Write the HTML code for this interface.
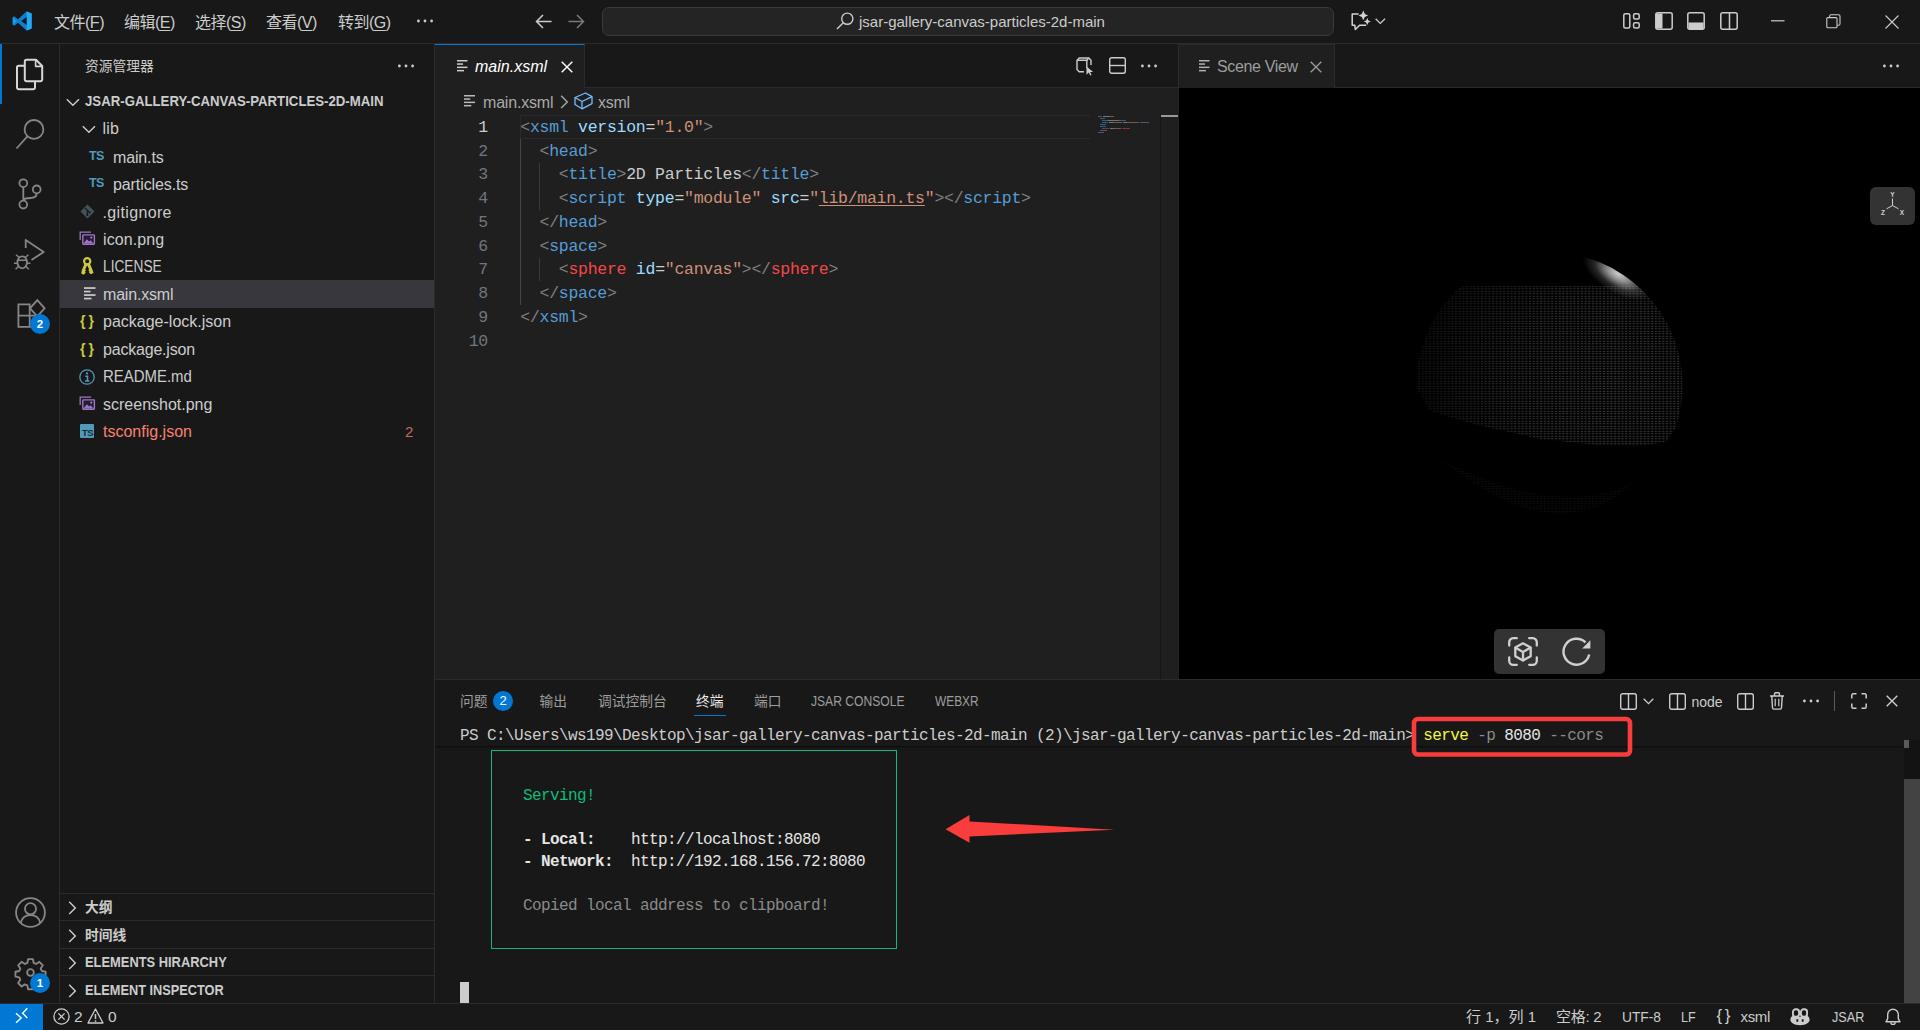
<!DOCTYPE html>
<html lang="zh-CN">
<head>
<meta charset="utf-8">
<title>jsar-gallery-canvas-particles-2d-main</title>
<style>
*{box-sizing:border-box;margin:0;padding:0}
html,body{width:1920px;height:1030px;overflow:hidden;background:#181818}
body{position:relative;font-family:"Liberation Sans","Noto Sans CJK SC",sans-serif;font-size:16px;color:#ccc}
.a{position:absolute}
.t{position:absolute;white-space:pre;line-height:20px;height:20px}
.m{font-family:"Liberation Mono","Noto Sans CJK SC",monospace}
svg{position:absolute;overflow:visible}
u{text-decoration-thickness:1px;text-underline-offset:2px}
/* ---------- regions ---------- */
#titlebar{left:0;top:0;width:1920px;height:44px;background:#181818;border-bottom:1px solid #2b2b2b}
#activity{left:0;top:44px;width:60px;height:959px;background:#181818;border-right:1px solid #2b2b2b}
#sidebar{left:60px;top:44px;width:375px;height:959px;background:#181818;border-right:1px solid #2b2b2b}
#ed1{left:435px;top:44px;width:744px;height:635px;background:#1f1f1f}
#ed2{left:1179px;top:44px;width:741px;height:635px;background:#000}
#panel{left:435px;top:679px;width:1485px;height:324px;background:#181818;border-top:1px solid #2b2b2b}
#status{left:0;top:1003px;width:1920px;height:27px;background:#181818;border-top:1px solid #2b2b2b}
/* title */
.menu{font-size:16px;letter-spacing:-.5px;color:#ccc}
/* tree */
.row{font-size:16px;color:#ccc}
.hd{font-size:13.75px;font-weight:700;color:#ccc}
.sec{left:0;width:374px;height:1px;background:#2b2b2b}
/* code */
.ln{font-size:16.5px;letter-spacing:-.275px;color:#6e7681;text-align:right;width:60px;height:24px;line-height:24px}
.cl{font-size:16.5px;letter-spacing:-.275px;height:24px;line-height:24px;color:#ccc}
.b{color:#808080}.g{color:#569cd6}.at{color:#9cdcfe}.s{color:#ce9178}.r{color:#f44747}
/* panel */
.pt{font-size:13.75px;color:#9d9d9d}
.tm{font-size:16px;letter-spacing:-.6px;height:22px;line-height:22px;color:#ccc}
.sb{font-size:15px;color:#ccc}
</style>
</head>
<body>
<!-- ============ TITLE BAR ============ -->
<div id="titlebar" class="a">
  <svg style="left:12px;top:11px" width="20" height="20" viewBox="0 0 100 100"><path d="M74 2 30 42 11 27 3 31v38l8 4 19-15 44 40 24-10V12z" fill="#1f9cf0"/><path d="M74 2 30 42l-19-15-8 4 20 19L3 69l8 4 19-15 44 40z" fill="#0d7fd1"/><path d="M74 30v40L46 50z" fill="#181818"/><path d="M74 2v96l24-10V12z" fill="#26a8f5"/></svg>
  <span class="t menu" style="left:54px;top:12.700px">文件(<u>F</u>)</span>
  <span class="t menu" style="left:124px;top:12.700px">编辑(<u>E</u>)</span>
  <span class="t menu" style="left:195px;top:12.700px">选择(<u>S</u>)</span>
  <span class="t menu" style="left:266px;top:12.700px">查看(<u>V</u>)</span>
  <span class="t menu" style="left:338px;top:12.700px">转到(<u>G</u>)</span>
  <svg style="left:416px;top:19px" width="18" height="4"><circle cx="2.4" cy="2" r="1.4" fill="#ccc"/><circle cx="9" cy="2" r="1.4" fill="#ccc"/><circle cx="15.6" cy="2" r="1.4" fill="#ccc"/></svg>
  <!-- nav arrows -->
  <svg style="left:535px;top:14px" width="17" height="15" fill="none" stroke="#ccc" stroke-width="1.5"><path d="M16.5 7.5H1.5M8 1 1.5 7.5 8 14"/></svg>
  <svg style="left:568px;top:14px" width="17" height="15" fill="none" stroke="#7a7a7a" stroke-width="1.5"><path d="M.5 7.5h15M9 1l6.5 6.5L9 14"/></svg>
  <!-- command center -->
  <div class="a" style="left:602px;top:7px;width:732px;height:29px;background:#242424;border:1px solid #3a3a3a;border-radius:7px"></div>
  <svg style="left:836px;top:12px" width="18" height="18" fill="none" stroke="#ccc" stroke-width="1.4"><circle cx="11.3" cy="6.7" r="5.6"/><path d="M7.3 10.7 1 17"/></svg>
  <span class="t" style="left:859px;top:12px;font-size:15px;color:#ccc">jsar-gallery-canvas-particles-2d-main</span>
  <!-- copilot -->
  <svg style="left:1351px;top:10px" width="22" height="22" fill="none" stroke="#d4d4d4" stroke-width="1.500" stroke-linejoin="round"><path d="M7.600 4H1.200v11.200h2.600l.5 4.300 4.300-4.300h6.600"/><path d="M12.300.6l1.500 3.300 3.300 1.500-3.300 1.500-1.500 3.300-1.500-3.300-3.300-1.500 3.300-1.500z" fill="#d4d4d4" stroke="none"/><path d="M16.300 8l1.100 2.400 2.400 1.100-2.400 1.100-1.100 2.400-1.100-2.400-2.400-1.100 2.400-1.100z" fill="#d4d4d4" stroke="none"/></svg>
  <svg style="left:1375px;top:17.500px" width="11" height="7" fill="none" stroke="#ccc" stroke-width="1.300"><path d="M.6.700 5.300 5.400 10 .7"/></svg>
  <!-- layout controls -->
  <svg style="left:1623px;top:13px" width="18" height="16" fill="none" stroke="#ccc" stroke-width="1.5"><rect x=".8" y=".8" width="6" height="14.2" rx="1.5"/><rect x="10.6" y=".8" width="5.6" height="5.2" rx="1.5"/><rect x="10.6" y="9.8" width="5.6" height="5.2" rx="1.5"/></svg>
  <svg style="left:1655px;top:12px" width="18" height="18" fill="none" stroke="#ccc" stroke-width="1.5"><rect x=".8" y=".8" width="16.4" height="16.4" rx="2"/><path d="M1 1.5h6.5v15H1z" fill="#ccc" stroke="none"/></svg>
  <svg style="left:1687px;top:12px" width="18" height="18" fill="none" stroke="#ccc" stroke-width="1.5"><rect x=".8" y=".8" width="16.4" height="16.4" rx="2"/><path d="M1.5 10.5h15V17h-15z" fill="#ccc" stroke="none"/></svg>
  <svg style="left:1720px;top:12px" width="18" height="18" fill="none" stroke="#ccc" stroke-width="1.5"><rect x=".8" y=".8" width="16.4" height="16.4" rx="2"/><path d="M9.5 1v16"/></svg>
  <!-- window controls -->
  <svg style="left:1771px;top:20px" width="14" height="2"><rect width="13.5" height="1.2" y=".2" fill="#ccc"/></svg>
  <svg style="left:1826px;top:14px" width="15" height="15" fill="none" stroke="#ccc" stroke-width="1.1"><rect x=".8" y="3.6" width="10.2" height="10.2" rx="1"/><path d="M3.6 3.4V2.2a1.4 1.4 0 0 1 1.4-1.4h7.6a1.4 1.4 0 0 1 1.4 1.4v7.6a1.4 1.4 0 0 1-1.4 1.4h-1.4"/></svg>
  <svg style="left:1885px;top:15px" width="14" height="14" fill="none" stroke="#ccc" stroke-width="1.1"><path d="M.5.5l13 13M13.5.5l-13 13"/></svg>
</div>
<!-- ============ ACTIVITY BAR ============ -->
<div id="activity" class="a">
  <div class="a" style="left:0;top:0;width:2px;height:60px;background:#0078d4"></div>
  <!-- files -->
  <svg style="left:15px;top:14px" width="30" height="32" fill="none" stroke="#d7d7d7" stroke-width="2" stroke-linejoin="round"><path d="M9.8 7.8h-6a1.8 1.8 0 0 0-1.8 1.8v19.800a1.800 1.800 0 0 0 1.800 1.800h14.400a1.800 1.800 0 0 0 1.800-1.800v-5.600"/><path d="M11.600 1.800h9.400l6.200 6.200v13.400a1.800 1.800 0 0 1-1.800 1.800h-13.800a1.800 1.800 0 0 1-1.800-1.800v-17.800a1.800 1.800 0 0 1 1.800-1.800z"/><path d="M20.600 2v6.400h6.400" stroke-width="1.600"/></svg>
  <!-- search -->
  <svg style="left:14px;top:74px" width="32" height="34" fill="none" stroke="#868686" stroke-width="1.8"><circle cx="20" cy="11.4" r="9.400"/><path d="M13.400 18.400 2.500 30.500"/></svg>
  <!-- scm -->
  <svg style="left:16px;top:132px" width="30" height="36" fill="none" stroke="#868686" stroke-width="1.8"><circle cx="7.300" cy="7.200" r="3.900"/><circle cx="7.300" cy="28.600" r="3.900"/><circle cx="20.700" cy="13.400" r="3.900"/><path d="M7.300 11.100v13.600M20.700 17.300c0 4-3 4.700-6.400 4.700-3.400 0-7 .2-7 2.700"/></svg>
  <!-- debug -->
  <svg style="left:12px;top:192px" width="36" height="36" fill="none" stroke="#868686" stroke-width="1.8" stroke-linejoin="round"><path d="M13.700 12V4l18 12-12.200 7.900"/><ellipse cx="10.200" cy="26.300" rx="4.800" ry="6"/><path d="M5.400 24.300h9.600M7.200 21.500 4 18.700M13.200 21.500l3.200-2.800M5.400 27.300H2M15 27.300h3.400M6.400 30.500 3.600 33.300M14 30.500l2.800 2.800" stroke-width="1.500"/></svg>
  <!-- extensions -->
  <svg style="left:17px;top:255px" width="32" height="34" fill="none" stroke="#868686" stroke-width="1.800"><path d="M1.400 5.300h11.300v11.300H1.400zM1.400 16.600h11.300v11.300H1.400zM12.700 16.600H24v11.300H12.700z"/><path d="M20.300 1.200l7.300 8.100-7.300 8.100-7.300-8.100z"/></svg>
  <div class="a" style="left:30px;top:270px;width:20px;height:20px;border-radius:10px;background:#0078d4"></div>
  <span class="t" style="left:30px;top:270px;width:20px;text-align:center;font-size:11.500px;font-weight:700;color:#fff">2</span>
  <!-- account -->
  <svg style="left:15px;top:853px" width="31" height="31" fill="none" stroke="#868686" stroke-width="1.800"><circle cx="15.500" cy="15.500" r="14.400"/><circle cx="15.500" cy="11.800" r="5.600"/><path d="M5.700 26c1.200-5 5-7.800 9.800-7.800s8.600 2.800 9.800 7.800"/></svg>
  <!-- gear -->
  <svg style="left:16px;top:914px" width="29" height="29" viewBox="-15.500 -15.500 31 31" fill="none" stroke="#868686" stroke-width="2" stroke-linejoin="round"><path d="M-2.600-14.300h5.200l.8 4.100 2.600 1.100 3.500-2.300 3.700 3.700-2.300 3.500 1.100 2.600 4.100.8v5.200l-4.100.8-1.100 2.600 2.300 3.500-3.700 3.700-3.500-2.300-2.600 1.100-.8 4.100h-5.200l-.8-4.100-2.600-1.100-3.500 2.300-3.700-3.700 2.300-3.500-1.100-2.600-4.100-.8v-5.200l4.100-.8 1.100-2.600-2.300-3.500 3.700-3.700 3.500 2.300 2.600-1.100z"/><circle r="3.600"/></svg>
  <div class="a" style="left:30px;top:929px;width:20px;height:20px;border-radius:10px;background:#0078d4"></div>
  <span class="t" style="left:30px;top:929px;width:20px;text-align:center;font-size:11.500px;font-weight:700;color:#fff">1</span>
</div>
<!-- ============ SIDEBAR ============ -->
<div id="sidebar" class="a">
  <span class="t" style="left:25px;top:12.500px;font-size:13.750px;color:#ccc">资源管理器</span>
  <svg style="left:337px;top:20px" width="18" height="4"><circle cx="2.400" cy="2" r="1.400" fill="#ccc"/><circle cx="9" cy="2" r="1.400" fill="#ccc"/><circle cx="15.600" cy="2" r="1.400" fill="#ccc"/></svg>
  <!-- root -->
  <svg style="left:6px;top:54px" width="14" height="9" fill="none" stroke="#ccc" stroke-width="1.400"><path d="M.8 1.200 6.900 7.300 13 1.200"/></svg>
  <span class="t hd" style="left:25px;top:48px;transform-origin:0 50%;transform:scaleX(.961)">JSAR-GALLERY-CANVAS-PARTICLES-2D-MAIN</span>
  <!-- selected row -->
  <div class="a" style="left:0;top:236px;width:374px;height:28px;background:#37373d"></div>
  <!-- lib -->
  <svg style="left:22px;top:81px" width="14" height="9" fill="none" stroke="#ccc" stroke-width="1.400"><path d="M.8 1.200 6.900 7.300 13 1.200"/></svg>
  <span class="t row" style="left:42.500px;top:75px;letter-spacing:.2px">lib</span>
  <span class="t" style="left:29px;top:102px;font-size:12.500px;font-weight:700;color:#519aba;letter-spacing:-.6px">TS</span>
  <span class="t row" style="left:53px;top:104px;letter-spacing:-.15px">main.ts</span>
  <span class="t" style="left:29px;top:129px;font-size:12.500px;font-weight:700;color:#519aba;letter-spacing:-.6px">TS</span>
  <span class="t row" style="left:53px;top:131px;letter-spacing:-.1px">particles.ts</span>
  <!-- .gitignore -->
  <svg style="left:20px;top:160px" width="15" height="15"><path d="M7.500.5l7 7-7 7-7-7z" fill="#41535b"/><path d="M5.200 4.200l4 3.800M7.300 6v5" stroke="#181818" stroke-width="1.200" fill="none"/><circle cx="7.300" cy="11" r="1.100" fill="#181818"/><circle cx="9.600" cy="8.300" r="1.100" fill="#181818"/></svg>
  <span class="t row" style="left:42.500px;top:159px;letter-spacing:.35px">.gitignore</span>
  <!-- icon.png -->
  <svg style="left:19px;top:187px" width="16" height="14"><path d="M1.200 9V1.200H12" fill="none" stroke="#a074c4" stroke-width="1.300"/><rect x="3.800" y="3.900" width="11.600" height="9.300" rx=".6" fill="#241c30" stroke="#a074c4" stroke-width="1.400"/><path d="M4.500 12.500l3.300-4.300 2.300 2.400 1.400-1.300 3.200 3.200z" fill="#a074c4"/><circle cx="12.300" cy="6.700" r="1.150" fill="#a074c4"/></svg>
  <span class="t row" style="left:43px;top:186px;letter-spacing:.1px">icon.png</span>
  <!-- LICENSE -->
  <svg style="left:21px;top:213px" width="13" height="18" fill="#cbcb41"><circle cx="6.200" cy="4.200" r="3.100" fill="none" stroke="#cbcb41" stroke-width="2.200"/><path d="M3.800 6l2.700 1.500-2.300 5 .9.900-1.200 1.200.8 1-1.800 2.100-2.700-1.100.7-3.600z"/><path d="M8.600 6L5.900 7.500l2.200 4.700-.8 1 1.200 1.100-.7 1 1.900 1.900 2.800-1.200-1.100-3.500z"/></svg>
  <span class="t row" style="left:43px;top:213px;transform-origin:0 50%;transform:scaleX(.857)">LICENSE</span>
  <!-- main.xsml -->
  <svg style="left:24px;top:243px" width="12" height="13" fill="#ccc"><rect x="0" y=".2" width="11.500" height="1.700"/><rect x="0" y="3.700" width="6.500" height="1.700"/><rect x="0" y="7.200" width="11.500" height="1.700"/><rect x="0" y="10.700" width="7.500" height="1.700"/></svg>
  <span class="t row" style="left:43px;top:241px;letter-spacing:-.18px">main.xsml</span>
  <!-- package-lock.json -->
  <span class="t" style="left:20px;top:267px;font-size:14px;font-weight:700;color:#cbcb41;letter-spacing:3px">{}</span>
  <span class="t row" style="left:43px;top:268px">package-lock.json</span>
  <span class="t" style="left:20px;top:294.500px;font-size:14px;font-weight:700;color:#cbcb41;letter-spacing:3px">{}</span>
  <span class="t row" style="left:43px;top:296px;letter-spacing:-.2px">package.json</span>
  <!-- README.md -->
  <svg style="left:19px;top:325px" width="16" height="16" fill="none" stroke="#519aba" stroke-width="1.300"><circle cx="8" cy="8" r="7.200"/><path d="M6.300 7.200h2.200v4.600M6 11.900h4.400" stroke-width="1.500"/><circle cx="8" cy="4.400" r="1.100" fill="#519aba" stroke="none"/></svg>
  <span class="t row" style="left:43px;top:323px;transform-origin:0 50%;transform:scaleX(.934)">README.md</span>
  <!-- screenshot.png -->
  <svg style="left:19px;top:352px" width="16" height="14"><path d="M1.200 9V1.200H12" fill="none" stroke="#a074c4" stroke-width="1.300"/><rect x="3.800" y="3.900" width="11.600" height="9.300" rx=".6" fill="#241c30" stroke="#a074c4" stroke-width="1.400"/><path d="M4.500 12.500l3.300-4.300 2.300 2.400 1.400-1.300 3.200 3.200z" fill="#a074c4"/><circle cx="12.300" cy="6.700" r="1.150" fill="#a074c4"/></svg>
  <span class="t row" style="left:43px;top:351px">screenshot.png</span>
  <!-- tsconfig.json -->
  <div class="a" style="left:20px;top:380px;width:14px;height:14px;background:#519aba;border-radius:1px"></div>
  <span class="t" style="left:20.500px;top:378.700px;width:14px;text-align:center;font-size:9.500px;font-weight:700;color:#1b2a33;letter-spacing:-.6px">TS</span>
  <span class="t row" style="left:43px;top:378px;color:#f88070">tsconfig.json</span>
  <span class="t" style="left:345px;top:378px;font-size:15px;color:#c4695f">2</span>
  <!-- bottom sections -->
  <div class="a sec" style="top:849px"></div>
  <svg style="left:8px;top:856.700px" width="9" height="14" fill="none" stroke="#ccc" stroke-width="1.400"><path d="M1.200.8 7.300 6.900 1.200 13"/></svg>
  <span class="t hd" style="left:25px;top:853.700px">大纲</span>
  <div class="a sec" style="top:876px"></div>
  <svg style="left:8px;top:884.700px" width="9" height="14" fill="none" stroke="#ccc" stroke-width="1.400"><path d="M1.200.8 7.300 6.900 1.200 13"/></svg>
  <span class="t hd" style="left:25px;top:881.500px">时间线</span>
  <div class="a sec" style="top:904px"></div>
  <svg style="left:8px;top:911.700px" width="9" height="14" fill="none" stroke="#ccc" stroke-width="1.400"><path d="M1.200.8 7.300 6.900 1.200 13"/></svg>
  <span class="t hd" style="left:25px;top:908.700px;transform-origin:0 50%;transform:scaleX(.937)">ELEMENTS HIRARCHY</span>
  <div class="a sec" style="top:931px"></div>
  <svg style="left:8px;top:939.700px" width="9" height="14" fill="none" stroke="#ccc" stroke-width="1.400"><path d="M1.200.8 7.300 6.900 1.200 13"/></svg>
  <span class="t hd" style="left:25px;top:936.500px;transform-origin:0 50%;transform:scaleX(.928)">ELEMENT INSPECTOR</span>
</div>
<!-- ============ EDITOR GROUP 1 ============ -->
<div id="ed1" class="a">
  <!-- tab strip -->
  <div class="a" style="left:0;top:0;width:744px;height:44px;background:#181818;border-bottom:1px solid #2b2b2b;border-right:1px solid #2b2b2b"></div>
  <div class="a" style="left:0;top:0;width:150px;height:44px;background:#1f1f1f;border-top:1px solid #0078d4;border-right:1px solid #2b2b2b"></div>
  <svg style="left:22px;top:16px" width="11" height="12" fill="#ccc"><rect x="0" y="0" width="10.500" height="1.500"/><rect x="0" y="3.300" width="6" height="1.500"/><rect x="0" y="6.600" width="10.500" height="1.500"/><rect x="0" y="9.900" width="7" height="1.500"/></svg>
  <span class="t" style="left:40px;top:12.500px;font-size:16px;font-style:italic;color:#fff">main.xsml</span>
  <svg style="left:126px;top:17px" width="12" height="12" fill="none" stroke="#fff" stroke-width="1.400"><path d="M.7.700l10.600 10.600M11.300.700.700 11.300"/></svg>
  <!-- editor actions -->
  <svg style="left:641px;top:13px" width="18" height="19" fill="none" stroke="#ccc" stroke-width="1.400" stroke-linejoin="round"><path d="M8 14.800H3.200L1 12.600V3.200L3.200 1h9.600L15 3.200V8"/><path d="M1.200 3.200h9.600v8"/><path d="M10.800 3.200 12.800 1"/><path d="M10.500 9.500v8.300l2.300-2.200 1.500 3 1.300-.7-1.500-2.900h3.100z" fill="#ccc" stroke="none"/></svg>
  <svg style="left:674px;top:13px" width="17" height="17" fill="none" stroke="#ccc" stroke-width="1.400"><rect x=".7" y=".7" width="15.600" height="15.600" rx="2"/><path d="M.7 8.500h15.600"/></svg>
  <svg style="left:705px;top:20px" width="18" height="4"><circle cx="2.400" cy="2" r="1.400" fill="#ccc"/><circle cx="9" cy="2" r="1.400" fill="#ccc"/><circle cx="15.600" cy="2" r="1.400" fill="#ccc"/></svg>
  <!-- breadcrumb -->
  <svg style="left:29px;top:51px" width="12" height="12" fill="#bbb"><rect x="0" y="0" width="11" height="1.500"/><rect x="0" y="3.300" width="6.300" height="1.500"/><rect x="0" y="6.600" width="11" height="1.500"/><rect x="0" y="9.900" width="7.300" height="1.500"/></svg>
  <span class="t" style="left:48px;top:49px;font-size:16px;letter-spacing:-.18px;color:#a9a9a9">main.xsml</span>
  <svg style="left:125px;top:51px" width="9" height="14" fill="none" stroke="#a9a9a9" stroke-width="1.400"><path d="M1.200.8 7.300 6.900 1.200 13"/></svg>
  <svg style="left:139px;top:48px" width="19" height="18" fill="none" stroke="#75beff" stroke-width="1.300" stroke-linejoin="round"><path d="M1 5.500 11.500 1l6.500 3.600v7L8 16.800 1 12.500z"/><path d="M1 5.500 8 9.500l10-4.900M8 9.500v7.300"/></svg>
  <span class="t" style="left:163px;top:49px;font-size:16px;letter-spacing:-.3px;color:#a9a9a9">xsml</span>
  <!-- current line -->
  <div class="a" style="left:85px;top:71px;width:570px;height:24px;border:1.500px solid #2a2a2a;border-right:0"></div>
  <!-- indent guides -->
  <div class="a" style="left:85px;top:95px;width:1px;height:166px;background:#444"></div>
  <div class="a" style="left:104px;top:119px;width:1px;height:47px;background:#3a3a3a"></div>
  <div class="a" style="left:104px;top:214px;width:1px;height:23px;background:#3a3a3a"></div>
  <!-- line numbers -->
  <span class="t m ln" style="left:-7px;top:71.75px;color:#ccc">1</span>
  <span class="t m ln" style="left:-7px;top:95.5px">2</span>
  <span class="t m ln" style="left:-7px;top:119.25px">3</span>
  <span class="t m ln" style="left:-7px;top:143px">4</span>
  <span class="t m ln" style="left:-7px;top:166.75px">5</span>
  <span class="t m ln" style="left:-7px;top:190.5px">6</span>
  <span class="t m ln" style="left:-7px;top:214.25px">7</span>
  <span class="t m ln" style="left:-7px;top:238px">8</span>
  <span class="t m ln" style="left:-7px;top:261.75px">9</span>
  <span class="t m ln" style="left:-7px;top:285.5px">10</span>
  <!-- code -->
  <span class="t m cl" style="left:85.300px;top:71.75px"><span class="b">&lt;</span><span class="g">xsml</span> <span class="at">version</span>=<span class="s">"1.0"</span><span class="b">&gt;</span></span>
  <span class="t m cl" style="left:85.300px;top:95.5px">  <span class="b">&lt;</span><span class="g">head</span><span class="b">&gt;</span></span>
  <span class="t m cl" style="left:85.300px;top:119.25px">    <span class="b">&lt;</span><span class="g">title</span><span class="b">&gt;</span>2D Particles<span class="b">&lt;/</span><span class="g">title</span><span class="b">&gt;</span></span>
  <span class="t m cl" style="left:85.300px;top:143px">    <span class="b">&lt;</span><span class="g">script</span> <span class="at">type</span>=<span class="s">"module"</span> <span class="at">src</span>=<span class="s">"<u>lib/main.ts</u>"</span><span class="b">&gt;&lt;/</span><span class="g">script</span><span class="b">&gt;</span></span>
  <span class="t m cl" style="left:85.300px;top:166.75px">  <span class="b">&lt;/</span><span class="g">head</span><span class="b">&gt;</span></span>
  <span class="t m cl" style="left:85.300px;top:190.5px">  <span class="b">&lt;</span><span class="g">space</span><span class="b">&gt;</span></span>
  <span class="t m cl" style="left:85.300px;top:214.25px">    <span class="b">&lt;</span><span class="r">sphere</span> <span class="at">id</span>=<span class="s">"canvas"</span><span class="b">&gt;&lt;/</span><span class="r">sphere</span><span class="b">&gt;</span></span>
  <span class="t m cl" style="left:85.300px;top:238px">  <span class="b">&lt;/</span><span class="g">space</span><span class="b">&gt;</span></span>
  <span class="t m cl" style="left:85.300px;top:261.75px"><span class="b">&lt;/</span><span class="g">xsml</span><span class="b">&gt;</span></span>
  <!-- minimap -->
  <svg style="left:663px;top:71px" width="54" height="20" opacity=".5">
    <rect x="0" y="1" width="4" height="1" fill="#569cd6"/><rect x="5" y="1" width="7" height="1" fill="#9cdcfe"/><rect x="12" y="1" width="4" height="1" fill="#ce9178"/>
    <rect x="2" y="3" width="5" height="1" fill="#569cd6"/>
    <rect x="4" y="5" width="6" height="1" fill="#569cd6"/><rect x="10" y="5" width="11" height="1" fill="#ccc"/><rect x="21" y="5" width="7" height="1" fill="#569cd6"/>
    <rect x="4" y="7" width="6" height="1" fill="#569cd6"/><rect x="11" y="7" width="5" height="1" fill="#9cdcfe"/><rect x="16" y="7" width="8" height="1" fill="#ce9178"/><rect x="25" y="7" width="4" height="1" fill="#9cdcfe"/><rect x="29" y="7" width="12" height="1" fill="#ce9178"/><rect x="42" y="7" width="9" height="1" fill="#569cd6"/>
    <rect x="2" y="9" width="6" height="1" fill="#569cd6"/>
    <rect x="2" y="11" width="6" height="1" fill="#569cd6"/>
    <rect x="4" y="13" width="7" height="1" fill="#f44747"/><rect x="12" y="13" width="3" height="1" fill="#9cdcfe"/><rect x="15" y="13" width="8" height="1" fill="#ce9178"/><rect x="24" y="13" width="8" height="1" fill="#f44747"/>
    <rect x="2" y="15" width="7" height="1" fill="#569cd6"/>
    <rect x="0" y="17" width="6" height="1" fill="#569cd6"/>
  </svg>
  <!-- overview ruler -->
  <div class="a" style="left:724.500px;top:71px;width:1.500px;height:564px;background:#151515"></div>
  <div class="a" style="left:726px;top:71px;width:17px;height:2px;background:#999"></div>
</div>
<!-- ============ EDITOR GROUP 2 (Scene View) ============ -->
<div id="ed2" class="a">
  <div class="a" style="left:0;top:0;width:741px;height:44px;background:#181818;border-bottom:1px solid #2b2b2b"></div>
  <div class="a" style="left:0;top:0;width:156px;height:44px;background:#1f1f1f;border-top:1px solid #2b2b2b;border-right:1px solid #2b2b2b"></div>
  <svg style="left:20px;top:16px" width="11" height="12" fill="#b0b0b0"><rect x="0" y="0" width="10.500" height="1.500"/><rect x="0" y="3.300" width="6" height="1.500"/><rect x="0" y="6.600" width="10.500" height="1.500"/><rect x="0" y="9.900" width="7" height="1.500"/></svg>
  <span class="t" style="left:38px;top:12.500px;font-size:16px;letter-spacing:-.34px;color:#9d9d9d">Scene View</span>
  <svg style="left:131px;top:17px" width="12" height="12" fill="none" stroke="#9d9d9d" stroke-width="1.300"><path d="M.7.700l10.600 10.600M11.300.700.700 11.300"/></svg>
  <svg style="left:703px;top:20px" width="18" height="4"><circle cx="2.400" cy="2" r="1.400" fill="#ccc"/><circle cx="9" cy="2" r="1.400" fill="#ccc"/><circle cx="15.600" cy="2" r="1.400" fill="#ccc"/></svg>
  <!-- sphere -->
  <svg style="left:0;top:44px" width="741" height="591" viewBox="1179 88 741 591">
    <defs>
      <pattern id="dots" x="0" y="0" width="3.700" height="2.500" patternUnits="userSpaceOnUse"><rect x=".8" y=".8" width="2.300" height="1" fill="#444"/></pattern>
      <clipPath id="sph"><circle cx="1549.500" cy="385.500" r="133"/></clipPath>
      <radialGradient id="shade" cx="1610" cy="385" r="195" gradientUnits="userSpaceOnUse"><stop offset="0" stop-color="#000" stop-opacity="0"/><stop offset=".45" stop-color="#000" stop-opacity=".15"/><stop offset="1" stop-color="#000" stop-opacity=".7"/></radialGradient>
      <radialGradient id="hl" cx=".5" cy=".5" r=".5"><stop offset="0" stop-color="#fff" stop-opacity=".8"/><stop offset=".3" stop-color="#fff" stop-opacity=".55"/><stop offset=".65" stop-color="#fff" stop-opacity=".15"/><stop offset="1" stop-color="#fff" stop-opacity="0"/></radialGradient>
      <filter id="bl"><feGaussianBlur stdDeviation="1.200"/></filter>
    </defs>
    <g clip-path="url(#sph)">
      <path d="M1400 286H1700V400L1678 425 1666 442 1640 446 1603 445.600 1540.600 439 1478 425 1431 411 1417 389H1400z" fill="url(#dots)"/>
      <path d="M1400 286H1700V400L1678 425 1666 442 1640 446 1603 445.600 1540.600 439 1478 425 1431 411 1417 389H1400z" fill="url(#shade)"/>
      <path d="M1440 459Q1559 555.500 1634 482Q1559 520.700 1440 459z" fill="url(#dots)" opacity=".22"/>
      <ellipse cx="1618" cy="274" rx="40" ry="19" fill="url(#hl)" transform="rotate(31.500 1618 274)"/>
    </g>
  </svg>
  <!-- axis gizmo button -->
  <div class="a" style="left:691px;top:143px;width:45px;height:38px;background:#333;border-radius:6px"></div>
  <svg style="left:691px;top:143px" width="45" height="38" fill="none" stroke="#d0d0d0" stroke-width="1"><path d="M22.500 18.600V11.500M22.500 18.600l-6 3.200M22.500 18.600l6 3.200"/><g fill="#d0d0d0" stroke="none" font-family="Liberation Sans,sans-serif" font-size="6.500" font-weight="700" text-anchor="middle"><text x="22.500" y="9.800">Y</text><text x="13" y="27.900">Z</text><text x="31.800" y="27.900">X</text></g></svg>
  <!-- bottom toolbar -->
  <div class="a" style="left:315px;top:585px;width:111px;height:45px;background:#333;border-radius:5px"></div>
  <svg style="left:329px;top:593px" width="30" height="29" fill="none" stroke="#d0d0d0" stroke-width="2.300" stroke-linecap="round" stroke-linejoin="round"><path d="M1.200 8.500V5.200a4 4 0 0 1 4-4h3.600M21.200 1.200h3.600a4 4 0 0 1 4 4v3.300M28.800 20.500v3.300a4 4 0 0 1-4 4h-3.600M8.800 27.800H5.200a4 4 0 0 1-4-4v-3.300"/><path d="M15 6.300l7.700 4.300v8.600L15 23.500l-7.700-4.300v-8.600z"/><path d="M7.600 10.800l7.400 4.200 7.400-4.200M15 15v8.300"/></svg>
  <svg style="left:383px;top:593px" width="30" height="29" fill="none" stroke="#d0d0d0" stroke-width="2.400"><path d="M23.500 5.300A13 13 0 1 0 27.200 17.500"/><path d="M28.400 3.200v8.300h-8.200z" fill="#d0d0d0" stroke="none"/></svg>
</div>
<!-- ============ PANEL ============ -->
<div id="panel" class="a">
  <span class="t pt" style="left:25px;top:11.500px">问题</span>
  <div class="a" style="left:58px;top:11px;width:20px;height:20px;border-radius:10px;background:#0078d4"></div>
  <span class="t" style="left:58px;top:11px;width:20px;text-align:center;font-size:13px;color:#fff">2</span>
  <span class="t pt" style="left:104.500px;top:11.500px">输出</span>
  <span class="t pt" style="left:163px;top:11.500px">调试控制台</span>
  <span class="t pt" style="left:261px;top:11.500px;color:#e7e7e7">终端</span>
  <div class="a" style="left:259px;top:34.700px;width:32px;height:1.300px;background:#0078d4"></div>
  <span class="t pt" style="left:319px;top:11.500px">端口</span>
  <span class="t pt" style="left:376px;top:11.500px;transform-origin:0 50%;transform:scaleX(.88)">JSAR CONSOLE</span>
  <span class="t pt" style="left:499.500px;top:11.500px;transform-origin:0 50%;transform:scaleX(.865)">WEBXR</span>
  <!-- panel actions -->
  <svg style="left:1184.500px;top:13px" width="17" height="17" fill="none" stroke="#ccc" stroke-width="1.400"><rect x=".7" y=".7" width="15.600" height="15.600" rx="2"/><path d="M8.500.7v15.600"/></svg>
  <svg style="left:1208px;top:18px" width="11" height="7" fill="none" stroke="#ccc" stroke-width="1.300"><path d="M.7.800 5.500 5.600 10.300.8"/></svg>
  <svg style="left:1233.500px;top:13px" width="17" height="17" fill="none" stroke="#ccc" stroke-width="1.400"><rect x=".7" y=".7" width="15.600" height="15.600" rx="2"/><path d="M8.500.7v15.600"/></svg>
  <span class="t" style="left:1256.500px;top:12px;font-size:14px;color:#ccc">node</span>
  <svg style="left:1302px;top:13px" width="17" height="17" fill="none" stroke="#ccc" stroke-width="1.400"><rect x=".7" y=".7" width="15.600" height="15.600" rx="2"/><path d="M8.500.7v15.600"/></svg>
  <svg style="left:1335px;top:12px" width="14" height="18" fill="none" stroke="#ccc" stroke-width="1.400"><path d="M0 4h14M4.500 3.500V2a1.200 1.200 0 0 1 1.200-1.200h2.600A1.200 1.200 0 0 1 9.500 2v1.500M1.800 4.300l.7 11.400a1.500 1.500 0 0 0 1.500 1.400h6a1.500 1.500 0 0 0 1.500-1.400l.7-11.400"/><path d="M5.200 6.800v7.400M8.800 6.800v7.400" stroke-width="1.200"/></svg>
  <svg style="left:1366.500px;top:19px" width="18" height="4"><circle cx="2.400" cy="2" r="1.400" fill="#ccc"/><circle cx="9" cy="2" r="1.400" fill="#ccc"/><circle cx="15.600" cy="2" r="1.400" fill="#ccc"/></svg>
  <div class="a" style="left:1399px;top:11px;width:1px;height:20px;background:#5a5a5a"></div>
  <svg style="left:1416px;top:13px" width="16" height="16" fill="none" stroke="#ccc" stroke-width="1.500"><path d="M.8 5.500V2.300A1.500 1.500 0 0 1 2.300.8h3.200M10.500.8h3.200a1.500 1.500 0 0 1 1.500 1.500v3.200M15.200 10.500v3.200a1.500 1.500 0 0 1-1.500 1.500h-3.200M5.500 15.200H2.300a1.500 1.500 0 0 1-1.500-1.500v-3.200"/></svg>
  <svg style="left:1450.500px;top:15px" width="12" height="12" fill="none" stroke="#ccc" stroke-width="1.400"><path d="M.7.700l10.600 10.600M11.300.700.700 11.300"/></svg>
  <!-- terminal -->
  <span class="t m tm" style="left:25px;top:45px">PS C:\Users\ws199\Desktop\jsar-gallery-canvas-particles-2d-main (2)\jsar-gallery-canvas-particles-2d-main&gt; <span style="color:#f5f543">serve</span> <span style="color:#8a8a8a">-p</span> <span style="color:#e5e5e5">8080</span> <span style="color:#8a8a8a">--cors</span></span>
  <div class="a" style="left:0;top:65.500px;width:1468px;height:2px;background:linear-gradient(#0c0c0c,#151515)"></div>
  <!-- serve box -->
  <div class="a" style="left:56px;top:70px;width:406px;height:198.500px;border:1.200px solid #12b87a"></div>
  <span class="t m tm" style="left:88px;top:105px;color:#0dbc79">Serving!</span>
  <span class="t m tm" style="left:88px;top:149px;color:#e5e5e5"><b>- Local:</b>    http://localhost:8080</span>
  <span class="t m tm" style="left:88px;top:171px;color:#e5e5e5"><b>- Network:</b>  http://192.168.156.72:8080</span>
  <span class="t m tm" style="left:88px;top:215px;color:#8a8a8a">Copied local address to clipboard!</span>
  <div class="a" style="left:25px;top:301.500px;width:9px;height:22px;background:#ccc"></div>
  <!-- red annotations -->
  <svg style="left:0;top:0" width="1485" height="324" viewBox="435 680 1485 324"><rect x="1414" y="719" width="216" height="35.500" rx="4" fill="none" stroke="#f93c3c" stroke-width="4.600"/><path d="M945.500 829.300 969.500 815v6.400l145 8.300-145 6.800v6.200z" fill="#f93c3c"/></svg>
  <!-- scrollbar -->
  <div class="a" style="left:1469px;top:60px;width:16px;height:39px;background:#131313"></div>
  <div class="a" style="left:1469px;top:60px;width:5px;height:8px;background:#5a5a5a"></div>
  <div class="a" style="left:1469px;top:99px;width:16px;height:225px;background:#434343"></div>
</div>
<!-- ============ STATUS BAR ============ -->
<div id="status" class="a">
  <div class="a" style="left:0;top:0;width:43px;height:27px;background:#0078d4"></div>
  <svg style="left:15px;top:3px" width="14" height="17" fill="none" stroke="#fff" stroke-width="1.400"><path d="M1 6.200l5.200 4.700L1 15.800M12.300 1.200 7.600 6.200l4.700 4.700"/></svg>
  <svg style="left:53px;top:3.500px" width="17" height="17" fill="none" stroke="#ccc" stroke-width="1.300"><circle cx="8.500" cy="8.500" r="7.600"/><path d="M5.400 5.400l6.200 6.200M11.600 5.400l-6.200 6.200"/></svg>
  <span class="t sb" style="left:74px;top:2.500px;font-size:15.500px">2</span>
  <svg style="left:87px;top:3.500px" width="17" height="16" fill="none" stroke="#ccc" stroke-width="1.300" stroke-linejoin="round"><path d="M8.500 1 16 15H1z"/><path d="M8.500 6v5M8.500 12.200v1.500" stroke-width="1.500"/></svg>
  <span class="t sb" style="left:108px;top:2.500px;font-size:15.500px">0</span>
  <span class="t sb" style="left:1466px;top:3px">行 1，列 1</span>
  <span class="t sb" style="left:1556px;top:3px;letter-spacing:-.3px">空格: 2</span>
  <span class="t sb" style="left:1621.500px;top:3px;transform-origin:0 50%;transform:scaleX(.918)">UTF-8</span>
  <span class="t sb" style="left:1681px;top:3px;transform-origin:0 50%;transform:scaleX(.84)">LF</span>
  <span class="t sb" style="left:1716.500px;top:2px;font-size:17px;letter-spacing:2.500px">{}</span>
  <span class="t sb" style="left:1740.500px;top:3px;letter-spacing:-.37px">xsml</span>
  <svg style="left:1790px;top:4px" width="20" height="18"><path d="M3.200 7.200C1.400 8.300.4 9.800.4 12c0 2.300 3.800 5.200 9.600 5.200s9.600-2.900 9.600-5.200c0-2.200-1-3.700-2.800-4.800l-.6 1.600H3.800z" fill="#ccc"/><rect x="2.900" y="1.300" width="6.200" height="7.400" rx="2.700" fill="#181818" stroke="#ccc" stroke-width="1.900"/><rect x="10.900" y="1.300" width="6.200" height="7.400" rx="2.700" fill="#181818" stroke="#ccc" stroke-width="1.900"/><path d="M7.300 11.200v2.600M12.700 11.200v2.600" stroke="#181818" stroke-width="1.900"/></svg>
  <span class="t sb" style="left:1831.500px;top:3px;transform-origin:0 50%;transform:scaleX(.843)">JSAR</span>
  <svg style="left:1885px;top:4px" width="16" height="18" fill="none" stroke="#ccc" stroke-width="1.400" stroke-linejoin="round"><path d="M8 1.200a5.300 5.300 0 0 0-5.300 5.300v4.200L1 13.800h14l-1.700-3.100V6.500A5.300 5.300 0 0 0 8 1.200z"/><path d="M5.800 14.200a2.200 2.200 0 0 0 4.400 0"/></svg>
</div>
</body>
</html>
